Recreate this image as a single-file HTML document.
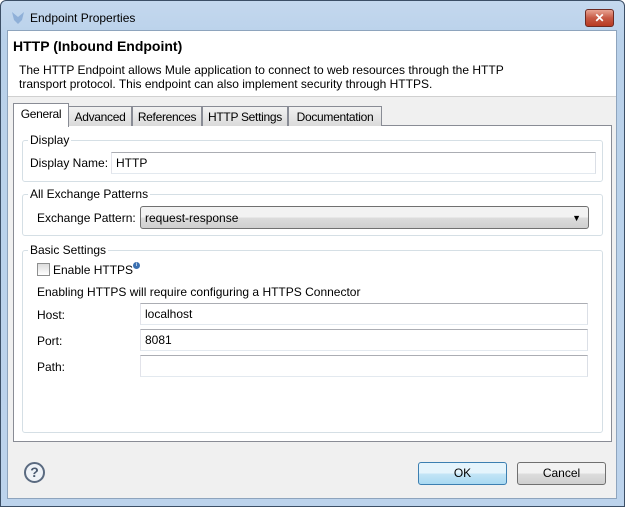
<!DOCTYPE html><html><head><style>
*{box-sizing:border-box;margin:0;padding:0}
body{width:625px;height:507px;overflow:hidden;font-family:"Liberation Sans",sans-serif;font-size:12px;color:#000;background:#fff}
.a{position:absolute;white-space:nowrap}
.win{left:0;top:0;width:625px;height:507px;background:linear-gradient(#c4d8ee,#b9d1ea 40px,#bcd3ec);border:1px solid #3c4f66;border-radius:6px 6px 0 0}
.client{left:7px;top:30px;width:610px;height:469px;background:#f0f0f0;border:1px solid #8ea4bd}
.inp{background:#fff;border:1px solid #abadb3;border-color:#abadb3 #dbdfe6 #e3e9ef #e2e3ea;padding:3px 4px;height:22px}
.grp{border:1px solid #d5dfe5;border-radius:3px}
.gl{background:#fff;padding:0 2px}
.tab{top:106px;height:20px;border:1px solid #898c95;border-bottom:none;background:linear-gradient(#f2f2f2,#dadada);padding:3px 0;text-align:center;letter-spacing:-0.3px;overflow:hidden}
.btn{border:1px solid #707070;border-radius:3px;background:linear-gradient(#f2f2f2 50%,#dddddd 50%,#cfcfcf);text-align:center;line-height:20px}
</style></head><body>
<div class="a win"></div>
<svg class="a" style="left:10px;top:10px" width="16" height="16"><path d="M2 2 L8 7 L14 2 L12 10 L8 14 L4 10Z" fill="#8fb0d8"/></svg>
<div class="a" style="left:30px;top:11px">Endpoint Properties</div>
<div class="a" style="left:585px;top:9px;width:29px;height:18px;border:1px solid #6d2a22;border-radius:3px;background:linear-gradient(#e8a493,#c75a45 50%,#b83a22);color:#fff;font-weight:bold;text-align:center;line-height:16px">✕</div>
<div class="a client"></div>
<div class="a" style="left:8px;top:31px;width:608px;height:66px;background:#fff;border-bottom:1px solid #d0d0d0"></div>
<div class="a" style="left:13px;top:38px;font-size:14px;font-weight:bold">HTTP (Inbound Endpoint)</div>
<div class="a" style="left:19px;top:63px;line-height:14px">The HTTP Endpoint allows Mule application to connect to web resources through the HTTP<br>transport protocol. This endpoint can also implement security through HTTPS.</div>
<div class="a" style="left:13px;top:125px;width:599px;height:317px;background:#fff;border:1px solid #898c95"></div>
<div class="a tab" style="left:68px;width:64px">Advanced</div>
<div class="a tab" style="left:132px;width:70px">References</div>
<div class="a tab" style="left:202px;width:86px">HTTP Settings</div>
<div class="a tab" style="left:288px;width:94px">Documentation</div>
<div class="a" style="left:13px;top:103px;width:56px;height:24px;background:#fff;border:1px solid #898c95;border-bottom:none;padding:3px 0;text-align:center;letter-spacing:-0.3px">General</div>
<div class="a grp" style="left:22px;top:140px;width:581px;height:42px"></div>
<div class="a gl" style="left:28px;top:133px">Display</div>
<div class="a" style="left:30px;top:156px">Display Name:</div>
<div class="a inp" style="left:111px;top:152px;width:485px">HTTP</div>
<div class="a grp" style="left:22px;top:194px;width:581px;height:42px"></div>
<div class="a gl" style="left:28px;top:187px">All Exchange Patterns</div>
<div class="a" style="left:37px;top:211px">Exchange Pattern:</div>
<div class="a" style="left:140px;top:206px;width:449px;height:23px;border:1px solid #707070;border-radius:3px;background:linear-gradient(#f2f2f2 50%,#dcdcdc 50%,#cfcfcf);padding:4px 4px">request-response<span style="position:absolute;right:7px;top:6px;font-size:9px">▼</span></div>
<div class="a grp" style="left:22px;top:250px;width:581px;height:183px"></div>
<div class="a gl" style="left:28px;top:243px">Basic Settings</div>
<div class="a" style="left:37px;top:263px;width:13px;height:13px;border:1px solid #8e8f8f;background:linear-gradient(#dcdcdc,#fff)"></div>
<div class="a" style="left:53px;top:263px">Enable HTTPS</div>
<div class="a" style="left:133px;top:262px;width:7px;height:7px;border-radius:50%;background:#3a6fb0;color:#fff;font-size:6px;text-align:center;line-height:7px">i</div>
<div class="a" style="left:37px;top:285px">Enabling HTTPS will require configuring a HTTPS Connector</div>
<div class="a" style="left:37px;top:308px">Host:</div>
<div class="a inp" style="left:140px;top:303px;width:448px">localhost</div>
<div class="a" style="left:37px;top:334px">Port:</div>
<div class="a inp" style="left:140px;top:329px;width:448px">8081</div>
<div class="a" style="left:37px;top:360px">Path:</div>
<div class="a inp" style="left:140px;top:355px;width:448px"></div>
<div class="a" style="left:24px;top:462px;width:21px;height:21px;border:2px solid #5a6a80;border-radius:50%;background:#eef2f7;text-align:center;font-weight:bold;font-size:14px;line-height:17px;color:#4a5a70">?</div>
<div class="a btn" style="left:418px;top:462px;width:89px;height:23px;border-color:#3c7fb1;background:linear-gradient(#e5f4fc 50%,#c4e5f6 50%,#a9d9f2)">OK</div>
<div class="a btn" style="left:517px;top:462px;width:89px;height:23px">Cancel</div>
</body></html>
